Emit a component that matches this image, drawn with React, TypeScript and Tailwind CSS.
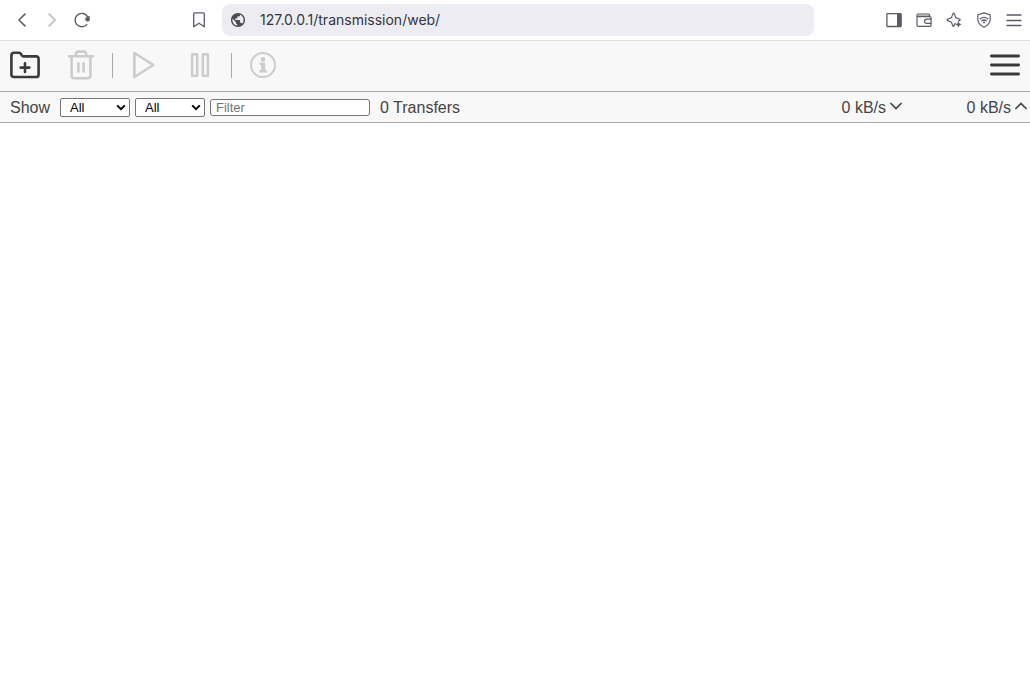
import React from "react";

type IconProps = { className?: string; children: React.ReactNode; w: number; h: number; sw?: number };

function Icon({ className = "", children, w, h, sw = 1.3 }: IconProps) {
  return (
    <svg
      aria-hidden="true"
      width={w}
      height={h}
      viewBox={`0 0 ${w} ${h}`}
      fill="none"
      stroke="currentColor"
      strokeWidth={sw}
      strokeLinecap="round"
      strokeLinejoin="round"
      className={`block shrink-0 ${className}`}
    >
      {children}
    </svg>
  );
}

function BrowserBar() {
  return (
    <header className="flex h-[41px] items-center border-b border-[#dddde2] bg-white pr-2 pl-3 text-[#5a5c66]">
      <nav aria-label="History" className="flex gap-[10px]">
        <button type="button" aria-label="Back">
          <Icon w={20} h={20} sw={1.5}>
            <path d="M13.4 3.6 L7 10 L13.4 16.4" strokeLinecap="butt" strokeLinejoin="miter" />
          </Icon>
        </button>
        <button type="button" aria-label="Forward" className="text-[#b9bac0]">
          <Icon w={20} h={20} sw={1.5}>
            <path d="M6.6 3.6 L13 10 L6.6 16.4" strokeLinecap="butt" strokeLinejoin="miter" />
          </Icon>
        </button>
        <button type="button" aria-label="Reload">
          <Icon w={20} h={20} sw={1.4}>
            <path d="M14.8 14.6 A6.7 6.7 0 1 1 16 7.5" />
            <path d="M13.4 8.2 L17.4 6.2 V10.8 L14.6 11.2 Z" fill="currentColor" strokeWidth="0.6" />
          </Icon>
        </button>
      </nav>
      <button type="button" aria-label="Bookmark" className="ml-[97px]">
        <Icon w={20} h={20} sw={1.3}>
          <path d="M4.7 3.8 Q4.7 2.8 5.7 2.8 H14.3 Q15.3 2.8 15.3 3.8 V16.8 L10 13.2 L4.7 16.8 Z" />
        </Icon>
      </button>
      <label className="ml-[13px] flex h-8 w-[592px] min-w-0 shrink items-center gap-[15px] rounded-lg bg-[#edecf2] px-[9px]">
        <svg aria-hidden="true" width="14" height="14" viewBox="2 2 20 20" className="shrink-0" fill="#4b4c55">
          <path d="M12 2C6.48 2 2 6.48 2 12s4.48 10 10 10 10-4.48 10-10S17.52 2 12 2zm-1 17.93c-3.95-.49-7-3.85-7-7.93 0-.62.08-1.21.21-1.79L9 15v1c0 1.1.9 2 2 2v1.93zm6.9-2.54c-.26-.81-1-1.39-1.9-1.39h-1v-3c0-.55-.45-1-1-1H8v-2h2c.55 0 1-.45 1-1V7h2c1.1 0 2-.9 2-2v-.41c2.93 1.19 5 4.06 5 7.41 0 2.08-.8 3.97-2.1 5.39z" />
        </svg>
        <input
          aria-label="Address"
          defaultValue="127.0.0.1/transmission/web/"
          className="min-w-0 flex-1 bg-transparent font-[Inter,sans-serif] text-sm text-[#34353b] outline-none"
        />
      </label>
      <div className="ml-auto flex gap-[14px] pl-4">
        <button type="button" aria-label="Side panel">
          <Icon w={16} h={16} sw={1.3}>
            <rect x="0.9" y="1.7" width="14.2" height="12.8" rx="0.5" />
            <path d="M11 1.5 H15.3 V14.5 H11 Z" fill="currentColor" stroke="none" />
          </Icon>
        </button>
        <button type="button" aria-label="Wallet">
          <Icon w={16} h={16} sw={1.2}>
            <path d="M1 3.4 V13 Q1 14.4 2.4 14.4 H14 Q15 14.4 15 13.4 V5.6 Q15 4.6 14 4.6 H2.2 Q1 4.6 1 3.3 Q1 2 2.2 2 H12.4 Q13.6 2 13.6 3.2 V4.4" />
            <path d="M2 2.6 H13 V4.2 H2 Z" fill="currentColor" fillOpacity="0.45" stroke="none" />
            <path d="M15 7.2 H10.8 Q8.6 7.2 8.6 9.3 Q8.6 11.4 10.8 11.4 H15" />
          </Icon>
        </button>
        <button type="button" aria-label="Assistant">
          <Icon w={16} h={16} sw={1.2}>
            <path d="M9.2 11.4 L7.6 14.4 Q7 14.4 6.8 13.8 L5.4 10.2 L1.4 8.4 Q0.8 7.8 1.4 7.2 L5.4 5.6 L7 1.6 Q7.6 0.8 8.2 1.6 L9.8 5.6 L13.8 7.2 Q14.5 7.8 13.8 8.4 L12.6 8.9" />
            <path d="M12.4 9.6 L13.2 11.6 L15.2 12.4 L13.2 13.2 L12.4 15.2 L11.6 13.2 L9.6 12.4 L11.6 11.6 Z" fill="currentColor" strokeWidth="0.4" />
          </Icon>
        </button>
        <button type="button" aria-label="VPN">
          <Icon w={16} h={16} sw={1.2}>
            <path d="M8 0.9 L14.2 3 V7.6 Q14 12.6 8 15.2 Q2 12.6 1.8 7.6 V3 Z" />
            <path d="M4.2 6.8 Q8 4 11.8 6.8 M5.8 8.8 Q8 7.2 10.2 8.8" strokeWidth="1.4" />
            <circle cx="8" cy="10.4" r="1" fill="currentColor" stroke="none" />
          </Icon>
        </button>
        <button type="button" aria-label="Browser menu">
          <Icon w={16} h={16} sw={1.3}>
            <path d="M1 3 H15 M1 8.5 H15 M1 13.5 H15" />
          </Icon>
        </button>
      </div>
    </header>
  );
}

function Toolbar() {
  return (
    <div role="toolbar" aria-label="Torrent actions" className="flex h-[51px] items-center border-b border-[#aaaaaa] bg-[#f8f8f8] px-[10px] pb-[2px] text-[#cccccc]">
      <button type="button" aria-label="Open torrent" className="text-[#3a3a3a]">
        <Icon w={30} h={30} sw={2.6}>
          <path d="M1.4 5.4 Q1.4 2.8 4 2.8 H9.2 Q10.4 2.8 11 4 L11.8 5.4 Q12.4 6.4 13.6 6.4 H26 Q28.6 6.4 28.6 9 V24.4 Q28.6 27 26 27 H4 Q1.4 27 1.4 24.4 Z" />
          <path d="M15 13.2 V22 M10.6 17.6 H19.4" />
        </Icon>
      </button>
      <button type="button" disabled aria-label="Remove" className="ml-[26px]">
        <Icon w={30} h={30} sw={2.6}>
          <path d="M3.2 6.2 H26.8 M9.9 6 V3.8 Q9.9 1.6 12.1 1.6 H17.9 Q20.1 1.6 20.1 3.8 V6 M5.6 6.8 V25.4 Q5.6 28.2 8.4 28.2 H21.6 Q24.4 28.2 24.4 25.4 V6.8 M12.4 13.4 V21.6 M17.6 13.4 V21.6" />
        </Icon>
      </button>
      <span className="ml-4 h-[25px] w-px bg-[#aaaaaa]" />
      <button type="button" disabled aria-label="Start" className="ml-4">
        <Icon w={30} h={30} sw={2.6}>
          <path d="M5.4 3 L24.4 15 L5.4 27 Z" />
        </Icon>
      </button>
      <button type="button" disabled aria-label="Pause" className="ml-[26px]">
        <Icon w={30} h={30} sw={2.4}>
          <path d="M7.1 4.3 H12.2 V25.7 H7.1 Z M17.8 4.3 H22.9 V25.7 H17.8 Z" />
        </Icon>
      </button>
      <span className="ml-4 h-[25px] w-px bg-[#aaaaaa]" />
      <button type="button" disabled aria-label="Inspector" className="ml-4">
        <Icon w={30} h={30} sw={2}>
          <circle cx="15" cy="15" r="12" />
          <circle cx="15" cy="9.4" r="2.3" fill="currentColor" stroke="none" />
          <path d="M11.6 12.6 H17.2 V20 H18.8 V22.6 H11.4 V20 H13.2 V15 H11.6 Z" fill="currentColor" stroke="none" />
        </Icon>
      </button>
      <button type="button" aria-label="More options" className="ml-auto text-[#3a3a3a]">
        <Icon w={30} h={30} sw={2.8}>
          <path d="M1.4 6 H28.6 M1.4 15 H28.6 M1.4 24 H28.6" />
        </Icon>
      </button>
    </div>
  );
}

function FilterSelect({ label, options }: { label: string; options: string[] }) {
  return (
    <span className="relative flex">
      <select
        aria-label={label}
        className="h-[19px] w-[70px] appearance-none rounded-[2px] border border-[#767676] bg-white pt-px pl-[9px] text-[13px] leading-4 text-black"
      >
        {options.map((o) => (
          <option key={o}>{o}</option>
        ))}
      </select>
      <Icon w={10} h={7} sw={2} className="pointer-events-none absolute top-[6px] right-1 text-black">
        <path d="M1.2 1.4 L5 5.2 L8.8 1.4" strokeLinecap="butt" strokeLinejoin="miter" />
      </Icon>
    </span>
  );
}

function Speed({ label, d }: { label: string; d: string }) {
  return (
    <div aria-label={label} className="flex w-[125px] items-center justify-end gap-[3px]">
      <span className="pt-[2px]">0 kB/s</span>
      <Icon w={14} h={14} sw={1.7}>
        <path d={d} strokeLinecap="butt" strokeLinejoin="miter" />
      </Icon>
    </div>
  );
}

function StatusBar() {
  return (
    <div className="flex h-[31px] items-center border-b border-[#aaaaaa] bg-[#f8f8f8] pr-[2px] pl-[10px] text-base text-[#444444]">
      <span className="pt-[2px] pr-[10px]">Show</span>
      <div className="flex items-center gap-[5px]">
        <FilterSelect label="Show by state" options={["All", "Active", "Downloading", "Seeding", "Paused", "Finished"]} />
        <FilterSelect label="Show by tracker" options={["All"]} />
        <input
          type="search"
          aria-label="Filter"
          placeholder="Filter"
          className="h-[17px] w-40 rounded-[3px] border border-[#767676] bg-white px-[5px] text-[13px] leading-[15px] placeholder:text-[#757575]"
        />
      </div>
      <span className="pt-[2px] pl-[10px]">0 Transfers</span>
      <div className="ml-auto flex">
        <Speed label="Download speed" d="M1.4 3 L7 8.6 L12.6 3" />
        <Speed label="Upload speed" d="M1.4 9 L7 3.4 L12.6 9" />
      </div>
    </div>
  );
}

export default function App() {
  return (
    <div className="min-h-screen bg-white font-['Liberation_Sans',Arial,sans-serif]">
      <BrowserBar />
      <Toolbar />
      <StatusBar />
      <main aria-label="Torrents" />
    </div>
  );
}
